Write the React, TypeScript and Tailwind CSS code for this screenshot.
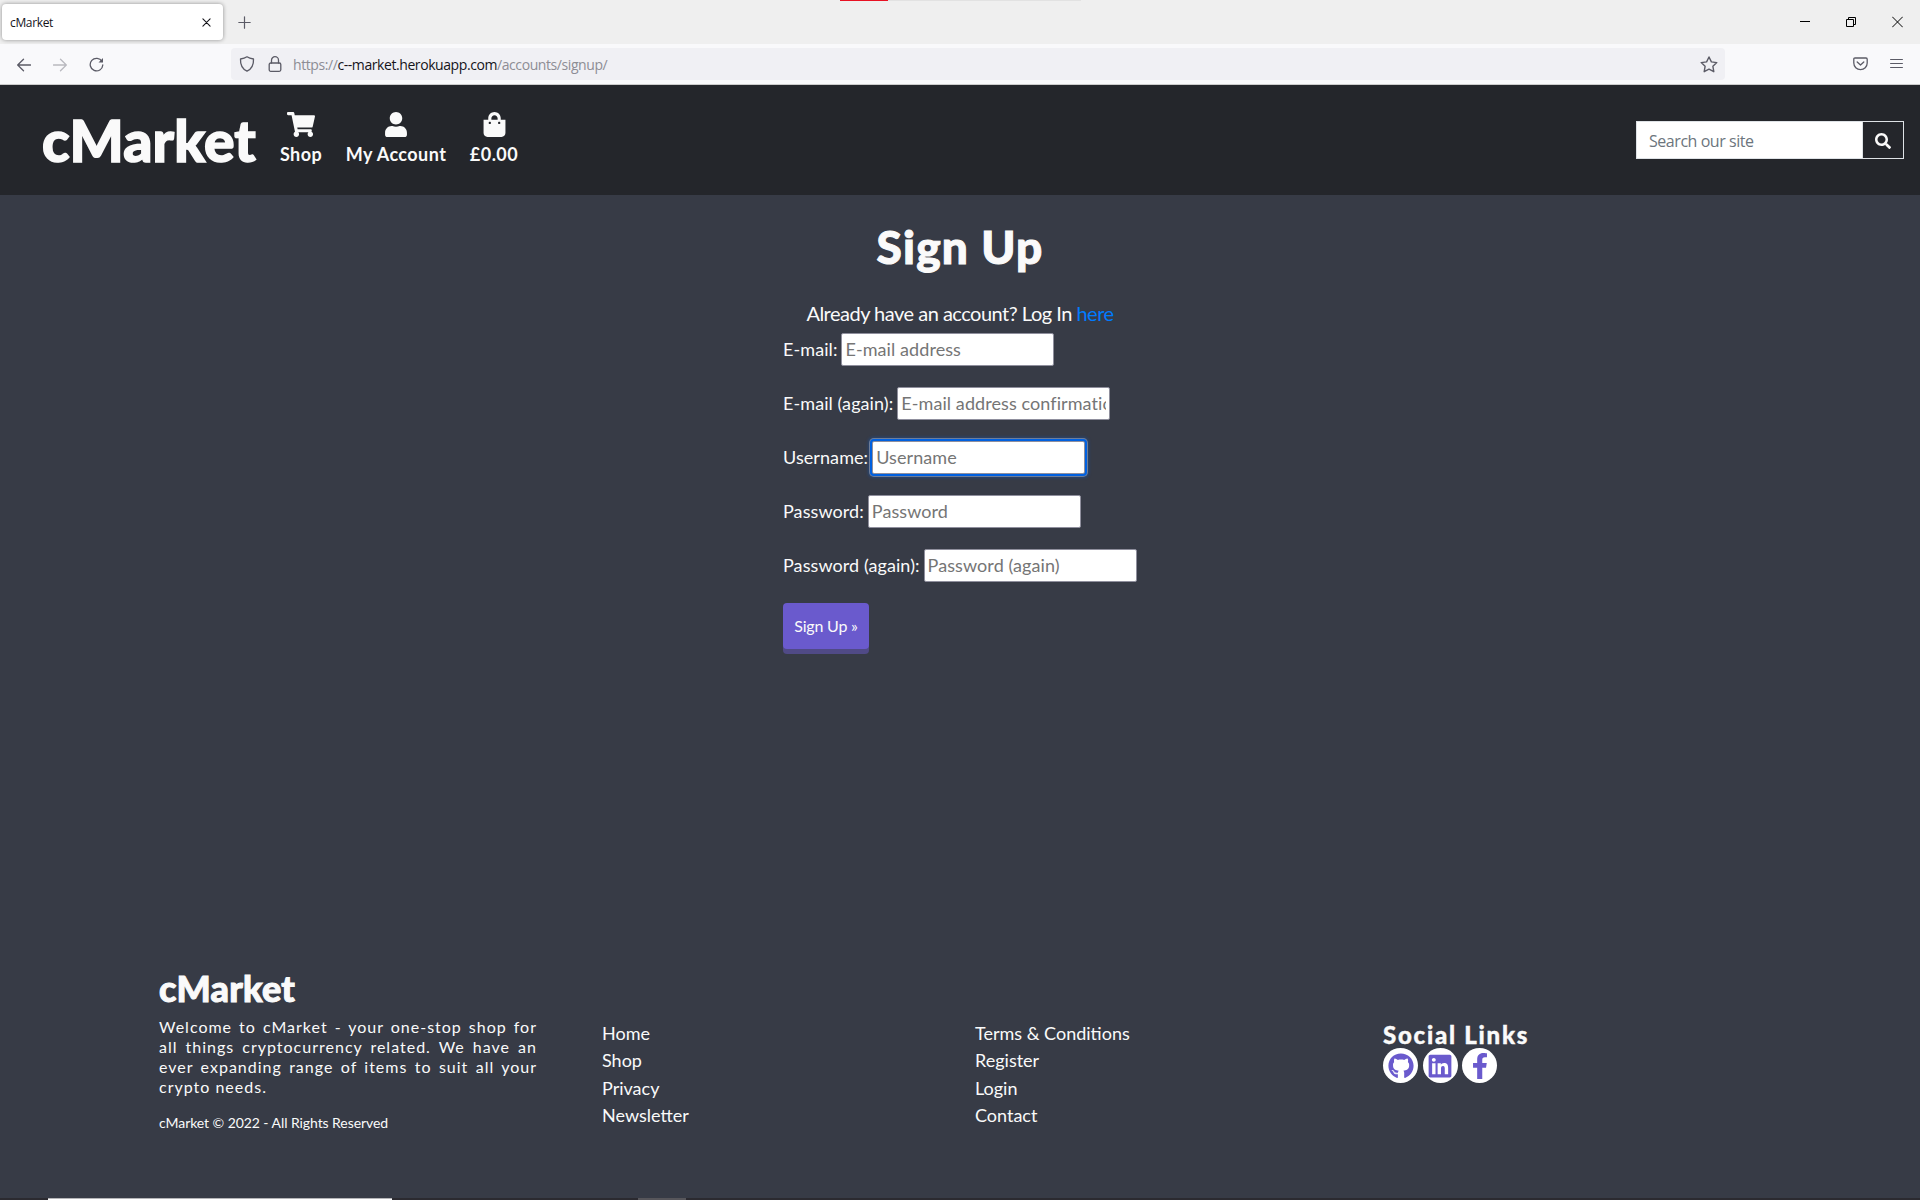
import React from "react";
import { FaShoppingCart, FaUser, FaShoppingBag, FaSearch, FaGithub, FaLinkedin, FaFacebookF } from "react-icons/fa";

const line = { fill: "none", stroke: "currentColor", strokeLinecap: "round" as const, strokeLinejoin: "round" as const };

function BrowserChrome() {
  return (
    <div className="h-[85px] font-['Open_Sans',sans-serif] text-[#5b5b66]">
      <div className="relative flex h-[44px] items-start bg-[#efefef]">
        <div className="absolute left-[840px] top-0 flex h-px w-[241px] bg-[#e2e2e2]">
          <div className="h-px w-[48px] bg-[#e81123]" />
        </div>
        <div className="ml-[2px] mt-[4px] flex h-[36px] w-[221px] items-center justify-between rounded-[4px] bg-white pl-[8px] pr-[12px] text-[#15141a] shadow-[0_0_4px_rgba(0,0,0,0.4)]">
          <span className="pt-[2px] text-[12px] tracking-[-0.35px]">cMarket</span>
          <svg width="9" height="9" viewBox="0 0 10 10" {...line} strokeWidth="1.2"><path d="M1 1l8 8M9 1l-8 8" /></svg>
        </div>
        <svg className="ml-[15px] mt-[16px]" width="13" height="13" viewBox="0 0 13 13" {...line} strokeWidth="1.2"><path d="M6.5.8v11.4M.8 6.5h11.4" /></svg>
        <div className="ml-auto mr-[17px] mt-[16px] flex gap-[35px] text-black">
          <svg width="11" height="12" viewBox="0 0 11 12" shapeRendering="crispEdges"><path d="M0 5h10v1H0z" fill="currentColor" /></svg>
          <svg width="11" height="12" viewBox="0 0 11 12" fill="none" stroke="currentColor"><path d="M.5 3.5h7v7h-7zM2.500 3V1.500h7v7H8" /></svg>
          <svg width="11" height="12" viewBox="0 0 11 12" {...line} strokeWidth="1"><path d="M.5 1l10 10M10.500 1l-10 10" /></svg>
        </div>
      </div>
      <div className="flex h-[41px] items-start border-b border-[#cccccc] bg-[#f9f9fb]">
        <div className="flex w-[231px] items-center gap-[22px] pl-[17px] pt-[13px]">
          <svg width="14" height="14" viewBox="0 0 14 14" {...line} strokeWidth="1.3"><path d="M13.500 7H.8M6.500 1.200L.7 7l5.800 5.800" /></svg>
          <svg className="text-[#b9b9bf]" width="14" height="14" viewBox="0 0 14 14" {...line} strokeWidth="1.3"><path d="M.5 7h12.700M7.500 1.200L13.300 7l-5.800 5.800" /></svg>
          <svg width="15" height="15" viewBox="0 0 15 15" {...line} strokeWidth="1.3"><path d="M13 4.500A6.300 6.300 0 1 0 13.800 8" /><path d="M14 1v4.500H9.500z" fill="currentColor" stroke="none" /></svg>
        </div>
        <div className="mt-[4px] flex h-[32px] w-[1494px] items-center rounded-[4px] bg-[#f0f0f4] pl-[8px] pr-[7px]">
          <svg width="16" height="16" viewBox="0 0 16 16" {...line} strokeWidth="1.3"><path d="M8 .8c1.700 1.200 3.900 1.900 6.500 2.200.3 5.800-1.300 9.700-6.500 12.200C2.800 12.700 1.200 8.800 1.500 3 4.100 2.700 6.300 2 8 .8z" /></svg>
          <svg className="ml-[13px]" width="14" height="16" viewBox="0 0 14 16" {...line} strokeWidth="1.300"><rect x="1.200" y="7" width="11.600" height="8.300" rx="1.500" /><path d="M3.500 7V4.200a3.500 3.500 0 0 1 7 0V7" /></svg>
          <span className="ml-[11px] whitespace-nowrap pt-px text-[14px] tracking-[-0.42px] text-[#8d8d94]">https://<span className="text-[#15141a]">c--market.herokuapp.com</span>/accounts/signup/</span>
          <svg className="ml-auto" width="18" height="17" viewBox="0 0 18 17" {...line} strokeWidth="1.400"><path d="M9 1l2.400 4.900 5.400.7-3.900 3.700.9 5.400L9 13.100l-4.800 2.600.9-5.400L1.200 6.600l5.400-.7z" /></svg>
        </div>
        <div className="ml-auto mr-[17px] mt-[13px] flex gap-[22px]">
          <svg width="15" height="14" viewBox="0 0 15 14" {...line} strokeWidth="1.300"><path d="M2 1h11q1.200 0 1.200 1.200V6a6.700 6.700 0 0 1-13.400 0V2.200Q.8 1 2 1zM4.200 5l3.300 3 3.300-3" /></svg>
          <svg width="13" height="13" viewBox="0 0 13 13" {...line} strokeWidth="1.200"><path d="M.6 2.500h11.800M.6 6.500h11.800M.6 10.500h11.800" /></svg>
        </div>
      </div>
    </div>
  );
}

function Header() {
  return (
    <header className="flex h-[110px] items-start bg-[#24262b]">
      <div className="ml-[42px] mt-[20px] w-[238px] whitespace-nowrap text-[57px] font-black leading-[70px] tracking-[0.1px] [-webkit-text-stroke:1.5px_#fafafa]">cMarket</div>
      <nav className="mt-[27px] flex gap-[24px] text-[18px] font-bold leading-[27px] tracking-[0.45px]">
        <a className="flex w-[42px] flex-col items-center"><FaShoppingCart className="mb-[4px] h-[25px] w-[28px]" />Shop</a>
        <a className="flex w-[100px] flex-col items-center whitespace-nowrap"><FaUser className="mb-[4px] h-[25px] w-[22px]" />My Account</a>
        <a className="flex w-[48px] flex-col items-center"><FaShoppingBag className="mb-[4px] h-[25px] w-[23px]" />£0.00</a>
      </nav>
      <div className="ml-auto mr-[16px] mt-[36px] flex h-[38px] w-[268px] border border-[#dee2e6]">
        <div className="flex w-[225px] items-center bg-white pl-[12px] pt-[2px] font-['Open_Sans',sans-serif] text-[16px] tracking-[-0.45px] text-[#6c757d]">Search our site</div>
        <div className="flex flex-1 items-center justify-center border-l border-[#dee2e6] pt-[2px]"><FaSearch className="size-[16px]" /></div>
      </div>
    </header>
  );
}

const fields = [
  ["E-mail:", "E-mail address", ""],
  ["E-mail (again):", "E-mail address confirmation", ""],
  ["Username:", "Username", "outline-2 outline-[#0060df] shadow-[0_0_0_3px_#6f7d97,0_0_3px_4px_rgba(0,96,223,0.3)]"],
  ["Password:", "Password", ""],
  ["Password (again):", "Password (again)", ""],
];

function SignUp() {
  return (
    <main className="flex h-[747px] flex-col items-center">
      <h1 className="mt-[22px] whitespace-nowrap text-[46px] font-black leading-[60px] tracking-[1.2px] [-webkit-text-stroke:1px_#fafafa]">Sign Up</h1>
      <p className="mt-[21px] whitespace-nowrap text-[20px] leading-[30px] tracking-[-0.5px]">Already have an account? Log In <a className="text-[#007bff]">here</a></p>
      <form className="mt-[5px] w-[354px]">
        {fields.map(([label, hint, cls]) => (
          <div key={label} className="mb-[21px] flex h-[33px] items-center whitespace-nowrap text-[18px] tracking-[0.08px]">
            <label>{label}</label>
            <div className={`ml-[4px] h-[33px] w-[213px] rounded-[2px] border border-[#8f8f9d] bg-white px-[3px] leading-[31px] text-[#757575] ${cls}`}>
              <div className="overflow-hidden">{hint}</div>
            </div>
          </div>
        ))}
        <button type="button" className="block h-[46px] w-[86px] rounded-[4px] bg-[#6a5acd] text-[16px] tracking-[-0.2px] shadow-[0_5px_0_#504a86]">Sign Up »</button>
      </form>
    </main>
  );
}

function Links({ items }: { items: string[] }) {
  return <ul className="text-[18px] leading-[27.300px]">{items.map((t) => <li key={t}>{t}</li>)}</ul>;
}

function Footer() {
  return (
    <footer className="flex h-[256px] items-start">
      <div className="ml-[159px] mt-[23px] w-[378px]">
        <div className="h-[52px] text-[36px] font-black leading-[47px] tracking-[0.2px] [-webkit-text-stroke:1px_#fafafa]">cMarket</div>
        <p className="text-justify text-[16px] leading-[20px] tracking-[1px]">Welcome to cMarket - your one-stop shop for all things cryptocurrency related. We have an ever expanding range of items to suit all your crypto needs.</p>
        <p className="mt-[15px] text-[14px] leading-[21px] tracking-[-0.07px]">cMarket © 2022 - All Rights Reserved</p>
      </div>
      <div className="ml-[65px] mt-[78px] w-[373px]"><Links items={["Home", "Shop", "Privacy", "Newsletter"]} /></div>
      <div className="mt-[78px] w-[408px]"><Links items={["Terms & Conditions", "Register", "Login", "Contact"]} /></div>
      <div className="mt-[78px]">
        <div className="h-[28px] whitespace-nowrap text-[24px] font-black leading-[29px] tracking-[1.75px] [-webkit-text-stroke:0.4px_#fafafa]">Social Links</div>
        <div className="flex gap-[4.500px] text-[#6a5acd]">
          <span className="flex size-[35px] items-center justify-center rounded-full bg-white"><FaGithub className="size-[26px]" /></span>
          <span className="flex size-[35px] items-center justify-center rounded-full bg-white"><FaLinkedin className="size-[26px]" /></span>
          <span className="flex size-[35px] items-center justify-center rounded-full bg-white"><FaFacebookF className="size-[26px]" /></span>
        </div>
      </div>
    </footer>
  );
}

export default function App() {
  return (
    <div className="h-[1200px] w-[1920px] overflow-hidden bg-[#373b46] font-['Lato',sans-serif] text-[#fafafa]">
      <BrowserChrome />
      <Header />
      <SignUp />
      <Footer />
      <div className="flex h-[2px] bg-[#2b2a30]">
        <div className="ml-[48px] w-[344px] border-t border-[#b5b5b8] bg-white" />
        <div className="ml-[246px] w-[48px] bg-[#57565b]" />
      </div>
    </div>
  );
}
